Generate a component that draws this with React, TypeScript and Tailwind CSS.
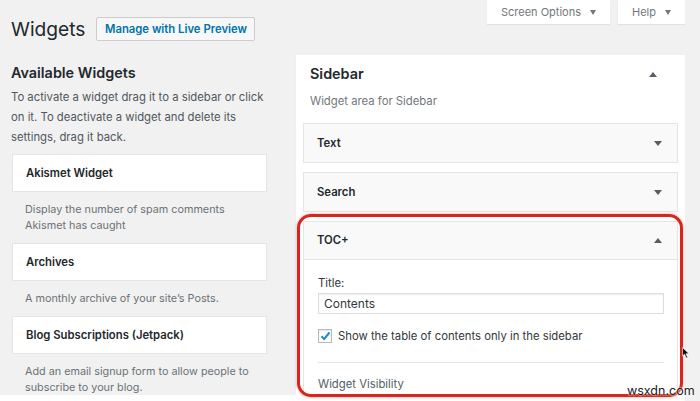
import React from 'react'

// WordPress widgets screen, sidebar area with TOC+ widget open

function Caret({ up = false }: { up?: boolean }) {
  return (
    <svg width="8" height="5" viewBox="0 0 8 5" className="shrink-0">
      {up ? <polygon points="0,5 8,5 4,0" fill="#555d66" /> : <polygon points="0,0 8,0 4,5" fill="#555d66" />}
    </svg>
  )
}

function ScreenTab({ label, width }: { label: string; width: string }) {
  return (
    <div className={`${width} h-[24px] bg-white shadow-[0_1px_1px_rgba(0,0,0,0.06)] flex items-center justify-center gap-[9px] text-[11px] text-[#72777c]`}>
      <span>{label}</span>
      <svg width="6" height="5" viewBox="0 0 6 5">
        <polygon points="0,0 6,0 3,5" fill="#72777c" />
      </svg>
    </div>
  )
}

function AvailableWidget({ title, desc }: { title: string; desc: string }) {
  return (
    <div>
      <div className="h-[38px] bg-white border border-[#e5e5e5] flex items-center px-[13px] text-[11.3px] font-semibold text-[#23282d]">
        {title}
      </div>
      <p className="pt-[10px] pb-[9px] px-[13px] text-[10.8px] leading-[16px] text-[#6c7177]">{desc}</p>
    </div>
  )
}

function SidebarWidget({ title }: { title: string }) {
  return (
    <div className="h-[40px] bg-[#f9f9f9] border border-[#e5e5e5] flex items-center justify-between pl-[13px] pr-[15px]">
      <span className="text-[11.3px] font-semibold text-[#23282d]">{title}</span>
      <Caret />
    </div>
  )
}

export default function App() {
  return (
    <div className="relative w-[700px] h-[401px] overflow-hidden bg-[#f1f1f1] text-[#23282d] font-['Inter','Noto_Sans',sans-serif]">
      {/* header */}
      <div className="flex items-start justify-between pl-[11px] pr-[15px]">
        <div className="flex items-center gap-[11px] pt-[17px]">
          <h1 className="text-[19.2px] leading-[24px] font-normal">Widgets</h1>
          <button className="w-[159px] h-[24px] border border-[#cccccc] bg-[#f7f7f7] rounded-[2px] text-[11.3px] font-semibold text-[#0073aa]">
            Manage with Live Preview
          </button>
        </div>
        <div className="flex gap-[8px]">
          <ScreenTab label="Screen Options" width="w-[123px]" />
          <ScreenTab label="Help" width="w-[67px]" />
        </div>
      </div>

      <div className="flex items-start pl-[12px] pt-[14px]">
        {/* available widgets */}
        <div className="w-[255px] pt-[8px]">
          <h2 className="-ml-[1px] text-[14.4px] leading-[20px] font-semibold">Available Widgets</h2>
          <p className="-ml-[1px] mt-[4px] text-[11.3px] leading-[20px] text-[#50575e]">
            To activate a widget drag it to a sidebar or click on it. To deactivate a widget and delete its settings, drag it back.
          </p>
          <div className="mt-[7px]">
            <AvailableWidget title="Akismet Widget" desc="Display the number of spam comments Akismet has caught" />
            <AvailableWidget title="Archives" desc="A monthly archive of your site’s Posts." />
            <AvailableWidget title="Blog Subscriptions (Jetpack)" desc="Add an email signup form to allow people to subscribe to your blog." />
          </div>
        </div>

        {/* sidebar area */}
        <div className="ml-[29px] w-[389px] h-[360px] bg-white shadow-[0_1px_1px_rgba(0,0,0,0.05)] px-[7px]">
          <div className="flex items-center justify-between pl-[7px] pr-[21px] pt-[9px]">
            <h3 className="text-[14.4px] leading-[20px] font-semibold">Sidebar</h3>
            <Caret up />
          </div>
          <p className="pl-[7px] mt-[7px] text-[11.3px] leading-[20px] text-[#72777c]">Widget area for Sidebar</p>

          <div className="mt-[12px] flex flex-col gap-[9px]">
            <SidebarWidget title="Text" />
            <SidebarWidget title="Search" />
            <div className="border border-[#e5e5e5]">
              <div className="h-[38px] bg-[#f9f9f9] border-b border-[#e5e5e5] flex items-center justify-between pl-[13px] pr-[15px]">
                <span className="text-[11.3px] font-semibold">TOC+</span>
                <Caret up />
              </div>
              <div className="bg-white pl-[14px] pr-[13px] pt-[13px] pb-[20px]">
                <label className="block text-[11.3px] leading-[20px] text-[#32373c]">Title:</label>
                <div className="h-[21px] border border-[#dddddd] shadow-[inset_0_1px_2px_rgba(0,0,0,0.07)] flex items-center px-[5px] text-[12px] text-[#32373c]">
                  Contents
                </div>
                <div className="mt-[12px] h-[20px] flex items-center gap-[6px]">
                  <span className="w-[14px] h-[14px] border border-[#b4b9be] bg-white flex items-center justify-center shadow-[inset_0_1px_2px_rgba(0,0,0,0.1)]">
                    <svg width="11" height="10" viewBox="0 0 11 10">
                      <path d="M1.5 5.2 L4.2 8 L9.5 1.5" fill="none" stroke="#1e8cbe" strokeWidth="2" />
                    </svg>
                  </span>
                  <span className="text-[11.3px] text-[#32373c]">Show the table of contents only in the sidebar</span>
                </div>
                <div className="mt-[16px] border-t border-[#e5e5e5]" />
                <div className="mt-[11px] text-[11.3px] leading-[20px] text-[#555d66]">Widget Visibility</div>
              </div>
            </div>
          </div>
        </div>
      </div>

      {/* bottom edge of the capture */}
      <div className="absolute left-0 bottom-0 w-[685px] h-[6px] bg-white" />

      {/* red annotation */}
      <div className="absolute left-[297px] top-[214px] w-[386px] h-[183px] border-[3px] border-[#d9261c] rounded-[14px] shadow-[0_0_3px_rgba(217,38,28,0.45)]" />

      {/* mouse pointer */}
      <svg className="absolute left-[682px] top-[347px]" width="8" height="12" viewBox="0 0 8 12">
        <path d="M0.5 0.5 L0.5 9 L2.6 7.2 L4.2 11 L5.6 10.4 L4 6.7 L7 6.7 Z" fill="#111" stroke="#fff" strokeWidth="0.6" />
      </svg>

      {/* watermark */}
      <div className="absolute left-[627px] top-[383px] text-[12.5px] leading-[15px] text-[#1a1a1a] [text-shadow:0_0_2px_#fff,0_0_2px_#fff]">
        wsxdn.com
      </div>
    </div>
  )
}
